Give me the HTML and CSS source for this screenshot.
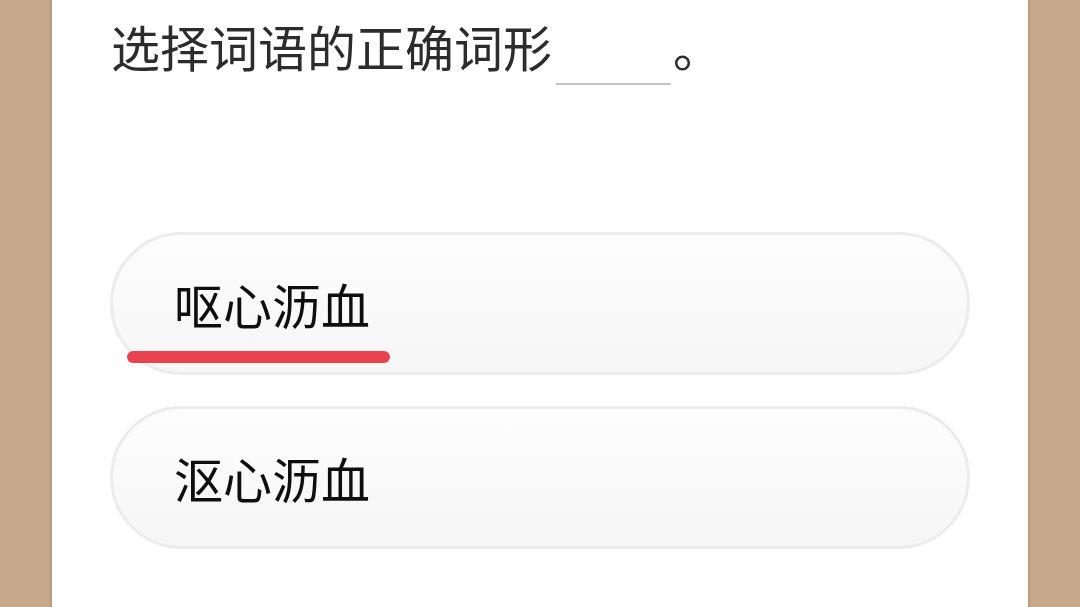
FILE: index.html
```html
<!DOCTYPE html>
<html lang="zh-CN">
<head>
<meta charset="utf-8">
<title>选择词语</title>
<link rel="stylesheet" href="styles.css">
</head>
<body>
<main class="card">
  <h1 class="question">选择词语的正确词形<span class="blank"></span>。</h1>
  <div class="options">
    <div class="option marked">
      <span class="label">呕心沥血</span>
      <span class="mark"></span>
    </div>
    <div class="option">
      <span class="label">沤心沥血</span>
    </div>
  </div>
</main>
</body>
</html>
```

FILE: styles.css
```css
html, body {
  margin: 0;
  padding: 0;
  height: 100%;
}
body {
  background: #c6a98a;
  overflow: hidden;
  font-family: "Noto Sans CJK SC", "Noto Sans", sans-serif;
}
.card {
  width: 976px;
  height: 100%;
  margin: 0 auto;
  background: #ffffff;
  box-shadow: -2px 0 0 #b99c7d, 2px 0 0 #b99c7d;
  padding: 22px 58px 0;
  box-sizing: border-box;
  display: flex;
  flex-direction: column;
}
.question {
  margin: 0 0 0 1px;
  height: 48px;
  font-size: 49px;
  line-height: 48px;
  font-weight: 400;
  color: #2c2c2c;
  white-space: nowrap;
}
.blank {
  display: inline-block;
  width: 115px;
  height: 1px;
  border-bottom: 2px solid #c3c3c3;
  vertical-align: -18px;
  margin: 0 2px 0 4px;
}
.options {
  margin-top: 162px;
  display: flex;
  flex-direction: column;
  gap: 31px;
}
.option {
  position: relative;
  height: 143px;
  box-sizing: border-box;
  border: 3px solid #ececec;
  border-radius: 72px;
  background: linear-gradient(#fdfdfd, #f6f6f6);
  display: flex;
  align-items: center;
  padding-left: 61px;
}
.label {
  font-size: 49px;
  line-height: 48px;
  font-weight: 400;
  color: #0e0e0e;
}
.mark {
  position: absolute;
  left: 14px;
  top: 116px;
  width: 263px;
  height: 12px;
  border-radius: 6px;
  background: #ea4350;
}
```
